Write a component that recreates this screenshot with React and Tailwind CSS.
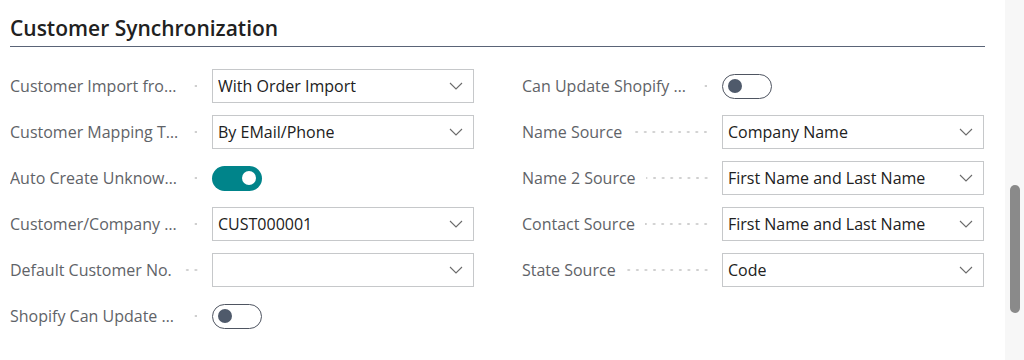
import React from 'react';

const Chevron = () => (
  <svg width="14" height="8" viewBox="0 0 14 8" fill="none" className="shrink-0">
    <path d="M1 1l6 6 6-6" stroke="#6b6b6b" strokeWidth="1.1" />
  </svg>
);

const Select = ({ value }) => (
  <div className="flex h-[34px] w-[262px] shrink-0 items-center justify-between border border-[#c6c8ca] bg-white pl-[5px] pr-[10px]">
    <span className="truncate text-[16px] text-[#212121]">{value}</span>
    <Chevron />
  </div>
);

const Toggle = ({ on }) =>
  on ? (
    <div className="flex h-[25px] w-[50px] items-center justify-end rounded-full bg-[#00848a] pr-[6px]">
      <div className="h-[14px] w-[14px] rounded-full bg-white" />
    </div>
  ) : (
    <div className="flex h-[25px] w-[50px] items-center rounded-full border border-[#4f5561] bg-white pl-[5px]">
      <div className="h-[14px] w-[14px] rounded-full bg-[#4f5a6b]" />
    </div>
  );

const Field = ({ label, value, toggle, narrow }) => (
  <div className="flex h-[34px] items-center">
    <div className={`flex shrink-0 items-center pr-[12px] ${narrow ? 'w-[200px]' : 'w-[202px]'}`}>
      <span className="truncate text-[16px] text-[#5f6368]">{label}</span>
      <div className="ml-[10px] h-[4px] min-w-[8px] flex-1 bg-[radial-gradient(circle,#cfcfcf_1px,transparent_1.4px)] bg-[length:8.6px_4px] bg-right bg-repeat-x" />
    </div>
    {toggle !== undefined ? <Toggle on={toggle} /> : <Select value={value} />}
  </div>
);

const left = [
  { label: 'Customer Import from Shopify', value: 'With Order Import' },
  { label: 'Customer Mapping Type', value: 'By EMail/Phone' },
  { label: 'Auto Create Unknown Customers', toggle: true },
  { label: 'Customer/Company Template Code', value: 'CUST000001' },
  { label: 'Default Customer No.', value: '' },
  { label: 'Shopify Can Update Customers', toggle: false },
];

const right = [
  { label: 'Can Update Shopify Customers', toggle: false },
  { label: 'Name Source', value: 'Company Name' },
  { label: 'Name 2 Source', value: 'First Name and Last Name' },
  { label: 'Contact Source', value: 'First Name and Last Name' },
  { label: 'State Source', value: 'Code' },
];

export default function App() {
  return (
    <div className="flex h-[360px] w-[1024px] overflow-hidden bg-white font-['Open_Sans',sans-serif]">
      <div className="w-[1005px] pl-[10px] pt-[14px]">
        <div className="w-[975px] border-b border-[#5a6477] pb-[4px]">
          <h2 className="text-[21px] font-semibold leading-[28px] text-[#212121]">Customer Synchronization</h2>
        </div>
        <div className="mt-[22px] flex gap-[48px]">
          <div className="flex w-[464px] flex-col gap-[12px]">
            {left.map((f) => (
              <Field key={f.label} {...f} />
            ))}
          </div>
          <div className="flex w-[462px] flex-col gap-[12px]">
            {right.map((f) => (
              <Field key={f.label} {...f} narrow />
            ))}
          </div>
        </div>
      </div>
      <div className="flex flex-1 justify-center bg-[#f7f7f7] pt-[185px]">
        <div className="h-[128px] w-[10px] rounded-full bg-[#8a8a8a]" />
      </div>
    </div>
  );
}
